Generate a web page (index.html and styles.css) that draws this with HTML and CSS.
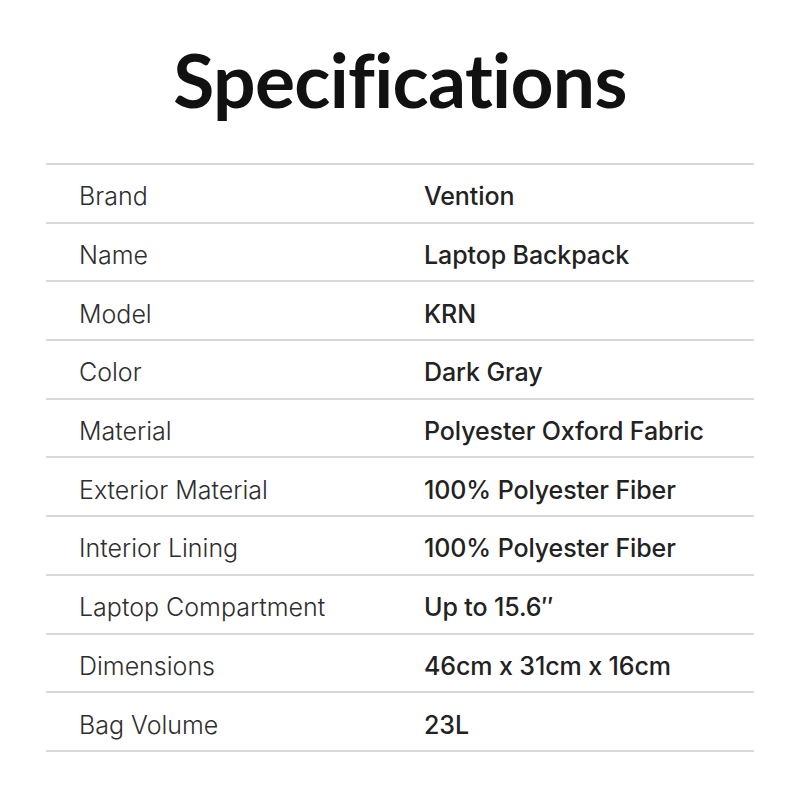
FILE: index.html
```html
<!DOCTYPE html>
<html lang="en">
<head>
<meta charset="utf-8">
<title>Specifications</title>
<link rel="stylesheet" href="styles.css">
</head>
<body>
<main class="page">
  <h1 class="title">Specifications</h1>
  <div class="specs">
    <div class="row"><span class="label">Brand</span><span class="value">Vention</span></div>
    <div class="row"><span class="label">Name</span><span class="value">Laptop Backpack</span></div>
    <div class="row"><span class="label">Model</span><span class="value">KRN</span></div>
    <div class="row"><span class="label">Color</span><span class="value">Dark Gray</span></div>
    <div class="row"><span class="label">Material</span><span class="value">Polyester Oxford Fabric</span></div>
    <div class="row"><span class="label">Exterior Material</span><span class="value">100% Polyester Fiber</span></div>
    <div class="row"><span class="label">Interior Lining</span><span class="value">100% Polyester Fiber</span></div>
    <div class="row"><span class="label">Laptop Compartment</span><span class="value">Up to 15.6″</span></div>
    <div class="row"><span class="label">Dimensions</span><span class="value">46cm x 31cm x 16cm</span></div>
    <div class="row"><span class="label">Bag Volume</span><span class="value">23L</span></div>
  </div>
</main>
</body>
</html>
```
FILE: styles.css
```css
html, body {
  margin: 0;
  padding: 0;
  background: #ffffff;
}
body {
  width: 800px;
  height: 800px;
  overflow: hidden;
  font-family: Inter, "Noto Sans", sans-serif;
}
.page {
  display: flex;
  flex-direction: column;
  align-items: center;
}
.title {
  margin: 34px 0 0 0;
  height: 129px;
  font-family: Lato, Inter, sans-serif;
  font-weight: 700;
  font-size: 75px;
  line-height: 90px;
  letter-spacing: -0.7px;
  font-variant-ligatures: none;
  font-feature-settings: "liga" 0, "clig" 0, "dlig" 0;
  color: #111111;
}
.specs {
  width: 708px;
  border-top: 2px solid #d9d9d9;
}
.row {
  display: grid;
  grid-template-columns: 345px 1fr;
  align-items: center;
  height: 58.7px;
  box-sizing: border-box;
  padding: 6px 0 0 33px;
  border-bottom: 2px solid #d9d9d9;
}
.label {
  font-weight: 300;
  font-size: 25px;
  color: #2e2e2e;
}
.value {
  font-weight: 500;
  font-size: 25px;
  letter-spacing: -0.1px;
  color: #222222;
}
```
